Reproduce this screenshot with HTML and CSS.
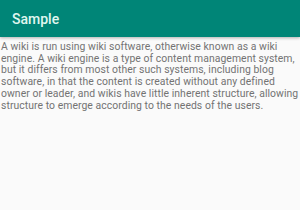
FILE: index.html
```html
<!DOCTYPE html>
<html lang="en">
<head>
  <meta charset="UTF-8" />
  <title>Sample</title>
  <link rel="stylesheet" href="styles.css">
</head>
<body>
  <div class="app-bar">
    <span class="title">Sample</span>
  </div>
  <p class="content">A wiki is run using wiki software, otherwise known as a wiki engine. A wiki engine is a type of content management system, but it differs from most other such systems, including blog software, in that the content is created without any defined owner or leader, and wikis have little inherent structure, allowing structure to emerge according to the needs of the users.</p>
</body>
</html>
```

FILE: styles.css
```css
body {
  margin: 0;
  background: #fafafa;
  font-family: Roboto, 'Noto Sans', sans-serif;
  width: 300px;
  height: 210px;
  overflow: hidden;
}

.app-bar {
  height: 37px;
  background: #008577;
  display: flex;
  align-items: center;
  padding-left: 12px;
  box-shadow: 0 1px 3px rgba(0,0,0,0.3);
}

.title {
  color: #e0f7f0;
  font-size: 14px;
  font-weight: 500;
  padding-top: 1px;
}

.content {
  margin: 4px 0 0 1px;
  color: #737373;
  font-size: 10.4px;
  line-height: 11.7px;
  letter-spacing: 0.06px;
}
```
